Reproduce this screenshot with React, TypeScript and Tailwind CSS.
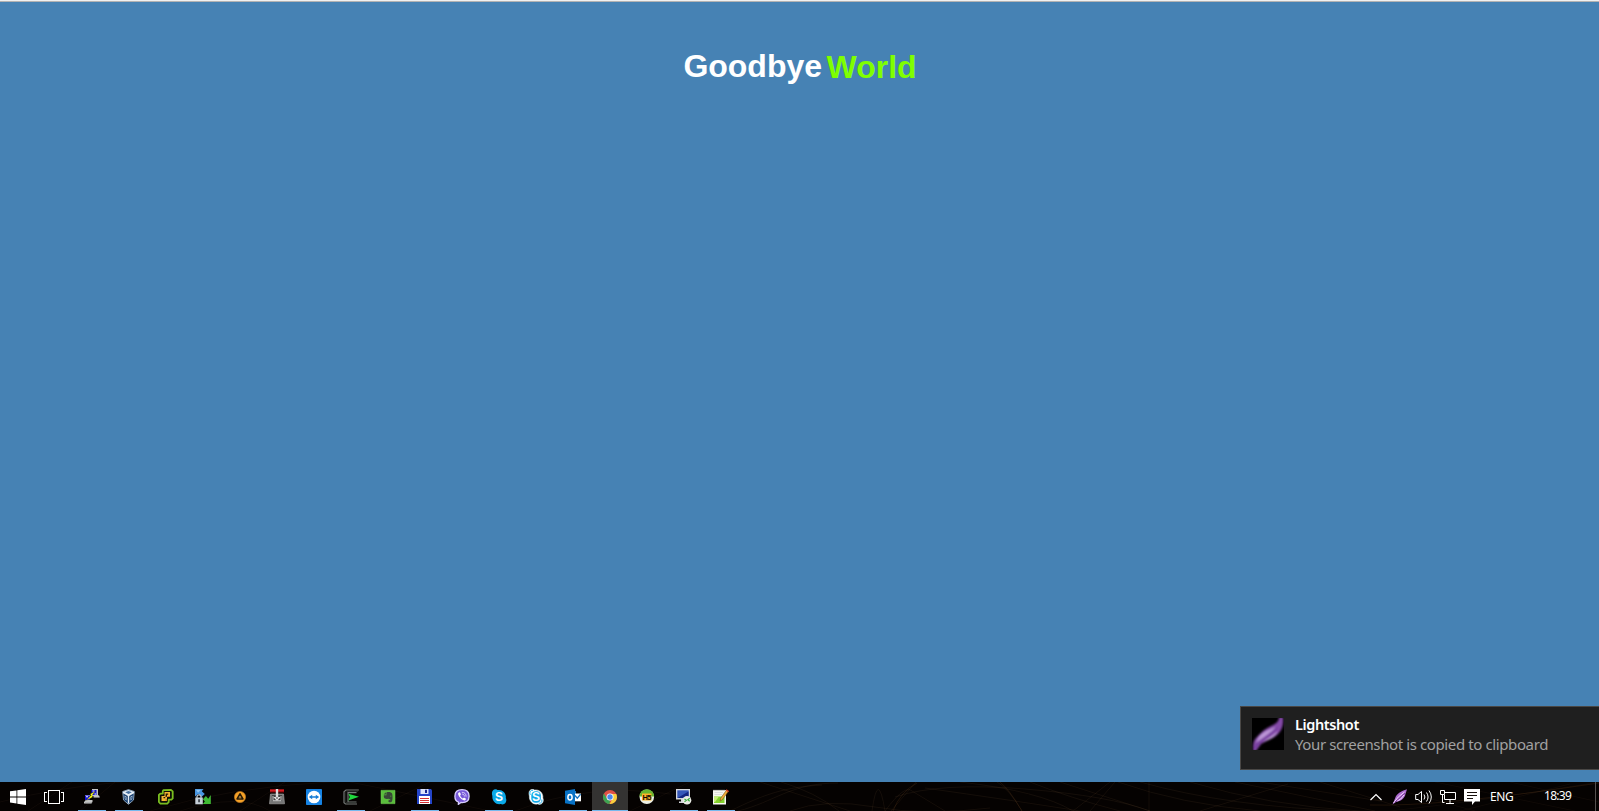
import type { ReactNode } from "react";

type TaskItem = { name: string; icon: ReactNode; running?: boolean; active?: boolean };

function Icon({ children }: { children: ReactNode }) {
  return (
    <svg viewBox="0 0 16 16" className="size-4 shrink-0" fill="none">
      {children}
    </svg>
  );
}

const windowsIcon = (
  <Icon>
    <path fill="#fff" d="M0 2.3 6.500 1.400V7.500H0zM7.300 1.300 16 0V7.500H7.300zM0 8.400H6.500V14.500L0 13.600zM7.300 8.400H16V16L7.300 14.700z" />
  </Icon>
);

const taskViewIcon = (
  <svg viewBox="0 0 20 14" className="h-3.5 w-5" fill="none" stroke="#fff" shapeRendering="crispEdges">
    <path d="M4.500.5h11v13h-11zM3 2.500H.5v9H3M17 2.500h2.500v9H17" />
  </svg>
);

const tasks: TaskItem[] = [
  {
    name: "PuTTY",
    running: true,
    icon: (
      <Icon>
        <path fill="#c4c4c4" d="M8 0h6v6l1.500 1v1.500h-6V7H8zM1 6h5v5h2.500v2L7 14.500H0V13l1.500-1.500z" />
        <path fill="#777" d="M10 8h5.500v.8H10zM1 13.700h7v.9H1z" />
        <path fill="#1010d8" d="M7.500 1h5v5h-5zM1 6.500h5v4.500H1z" />
        <path fill="#fff" d="M8.500 1.500h2v1h-2zM2 7.200h2v1H2zM10.500 4.500h1.500v1h-1.500z" />
        <path fill="#ffff18" stroke="#3b3b00" strokeWidth=".3" d="M11.300 2.300 6.200 5l.8 1.300-4.500 5L8.800 8 7.900 6.500z" />
      </Icon>
    ),
  },
  {
    name: "VirtualBox",
    running: true,
    icon: (
      <Icon>
        <path fill="#163c6c" stroke="#a8c0d8" strokeWidth=".8" d="M7.500.6 13.300 2.500l-.8 8.500-5 4.300-5-4.300-.8-8.500z" />
        <path fill="#e5edf5" d="M2 2.700 7.500.900 13 2.700v1.500L8.200 7v7.500H6.800V7L2 4.200z" />
        <path fill="#416d9f" d="m4.200 3.200 3.300-1.200 3.300 1.200-3.300 1.700z" />
        <path fill="#b9ccdf" d="m3.500 6.500 2 1.200v3.700l-1.700-1.300zM11.500 6.500l-2 1.200v3.700l1.700-1.300z" />
        <path fill="#1c477b" d="m4.200 7.800.8.500v1.800l-.7-.6zM10.800 7.800l-.8.500v1.800l.7-.6z" />
      </Icon>
    ),
  },
  {
    name: "vSphere",
    icon: (
      <Icon>
        <path fill="#0c0d05" stroke="#79bd20" strokeWidth="1.800" strokeLinejoin="round" d="m5.500 1.200 7.500-.3 1.700 1.500v7l-1.500 1.300h-2.500v2.500L9.200 14.600l-7-.1L.9 13V6l1.400-1.400h2.500V2z" />
        <path fill="#f2b632" d="M6.500 3H12v5H9v4H3.500V7h3z" />
        <path fill="#241407" d="M7.700 4.500h2.500v1.300H9v2H7.200v1.500H5.500V8h2z" />
        <path fill="#c9791e" d="M9.500 7h2.500v1h-3v3.800H7.500V10h1.200z" />
      </Icon>
    ),
  },
  {
    name: "WinSCP",
    icon: (
      <Icon>
        <path fill="#4996e1" d="M0 0h8.500L6.800 2.200l3 2.700-3.300 3L3.300 5 0 7.500z" />
        <path fill="#8ec4f0" d="M1 .8h5L3 3.800z" />
        <path fill="#3fba34" d="M15.800 15H7.700l2.200-2.500-2-2.200 3-3.300 2.300 2.700L15.800 6z" />
        <path stroke="#b8c0c9" strokeWidth="1.300" d="M2 9V7.800c0-2.500 4-2.500 4 0V9" />
        <path fill="#c6d0d8" d="M.3 8.500h7.500v6.800H.3z" />
        <path fill="#282f38" d="M3.300 10.300h1.500v3H3.300z" />
      </Icon>
    ),
  },
  {
    name: "Antivirus",
    icon: (
      <Icon>
        <circle cx="8" cy="8" r="5.600" fill="#f6a126" stroke="#c07a25" strokeWidth=".6" />
        <path fill="#fec35b" stroke="#251907" strokeWidth="1.600" strokeLinejoin="round" d="m8 4.800 2.900 5.200H5.100z" />
        <path fill="#513611" d="m8 7.600.8 1.400H7.200z" />
      </Icon>
    ),
  },
  {
    name: "Download tool",
    icon: (
      <Icon>
        <path fill="#757575" stroke="#a9a9a9" strokeWidth=".6" d="M1.500 5h13l1 9.800H.5z" />
        <path fill="#414141" d="M3 6h10v6H3z" />
        <path fill="#d71920" d="M1 .3h14v2.900H1z" />
        <path fill="#83070a" d="M1 2.400h14v.8H1z" />
        <path fill="#ddd" d="M6.800 0h2.400v8h2.500L8 12 4.300 8h2.500z" />
        <path stroke="#c5c5c5" d="M4 7v4.700h8V7" />
        <path fill="#444" d="M7.500 8h1v2h-1z" />
      </Icon>
    ),
  },
  {
    name: "TeamViewer",
    icon: (
      <Icon>
        <rect width="16" height="16" rx=".8" fill="#1683e4" />
        <circle cx="8" cy="8" r="6.300" fill="#fff" />
        <path fill="#167cd5" d="m2.800 8 3.400-2.200v1.400h3.600V5.800L13.200 8l-3.400 2.200V8.800H6.200v1.400z" />
      </Icon>
    ),
  },
  {
    name: "Terminal",
    running: true,
    icon: (
      <Icon>
        <path stroke="#747977" strokeWidth="1.200" d="M15.800 1H3L1 2.800v11L2.500 15H14M13.500 3.600H5v9.200l8.500.2" />
        <path stroke="#343a36" strokeWidth=".7" d="M15 2.300H4L2.800 3.500v10H13" />
        <path fill="#20d83e" d="m5.300 4.800 10.700 3-10.700 3.600 1.500-3.500z" />
      </Icon>
    ),
  },
  {
    name: "Evernote",
    icon: (
      <Icon>
        <path fill="#5bbd3d" stroke="#72cb56" strokeWidth=".5" d="M1 1.300h14v13.400H1z" />
        <path fill="#384438" d="M6.400 3.400c2.400-.7 5.300-.2 5.800 1.700.7 2.700.4 7.500-.8 7.900-1.500.6-3.300.1-3-1.300.2-1 1.400-.7 1.800-.3v-1.200c-.9.5-1.800-.2-2-.8-.7.7-2 .7-3.300.1-1-.5-1.300-2.200-1-3.300h2.500z" />
        <path fill="#384438" d="M3.600 5.500 5.900 3.200v2.300z" />
        <path fill="#58bb3a" d="M10.300 6.800h1v.8h-1z" />
      </Icon>
    ),
  },
  {
    name: "Total Commander",
    running: true,
    icon: (
      <Icon>
        <path fill="#2444c8" d="M0 0h14l1 1.300V15H0z" />
        <path fill="#dce4fa" d="M3.500 0h8v5h-8z" />
        <path fill="#182893" d="M8 .8h2v3.300H8z" />
        <path fill="#fff" d="M2 7h11v8H2z" />
        <path stroke="#d32f32" strokeWidth="1.100" d="M3 9.500h9M3 11.500h9M3 13.500h9" />
      </Icon>
    ),
  },
  {
    name: "Viber",
    icon: (
      <Icon>
        <path fill="#7658d8" stroke="#d8cfff" strokeWidth="1.300" d="M8 .7C3.200.7.900 2.600.900 7.200c0 3.200 1.200 5 3.500 5.800v2.300L7 13.500c5.500.4 8.100-1.500 8.100-6.300C15.100 2.600 12.800.7 8 .7z" />
        <path fill="#fff" d="M5 3.500c.6-.4 1 .1 1.700 1.300.5.900-.4 1.300-.6 1.700.5 1.500 1.500 2.500 2.700 2.900.6-.2.800-1.100 1.700-.6 1.400.8 1.700 1.200 1.300 1.700-.5.800-1.300 1.200-2.200.8-2.700-1.200-4.700-3.300-5.500-6-.2-.7.200-1.400.9-1.800z" />
        <path stroke="#e9e3ff" strokeWidth=".8" strokeLinecap="round" d="M8.200 3.300c2.500.1 3.900 1.500 3.900 4M8.500 5.100c1.200.1 1.800.8 1.900 2" />
      </Icon>
    ),
  },
  {
    name: "Skype",
    running: true,
    icon: (
      <Icon>
        <path fill="#0ba9e8" d="M4.500.3c1 0 1.500.4 2 .7C11.500.2 15.500 4 14.800 9c1.800 3.500-1.200 7.700-5 6C5 16 .8 12 1.400 7 .1 3.500 1.600.3 4.500.3z" />
        <text x="8.100" y="12.100" fill="#fff" textAnchor="middle" fontFamily="Liberation Sans, sans-serif" fontWeight="700" fontSize="12">S</text>
      </Icon>
    ),
  },
  {
    name: "Skype for Business",
    icon: (
      <Icon>
        <path fill="#fff" stroke="#d9f2fd" strokeWidth=".5" d="M4.500.3c1 0 1.500.4 2 .7C11.500.2 15.500 4 14.800 9c1.800 3.500-1.200 7.700-5 6C5 16 .8 12 1.400 7 .1 3.500 1.600.3 4.500.3z" />
        <path stroke="#13aae9" strokeWidth=".9" d="M5 1.500C2.500.8 1.200 3.500 2.300 6M13.800 10.500c.8 2.400-1 4.200-3 3.700" />
        <rect x="3.300" y="2.300" width="9.600" height="11.400" rx="4.200" fill="#12a9e9" />
        <text x="8.100" y="12.200" fill="#fff" textAnchor="middle" fontFamily="Liberation Sans, sans-serif" fontWeight="700" fontSize="12">S</text>
      </Icon>
    ),
  },
  {
    name: "Outlook",
    running: true,
    icon: (
      <Icon>
        <path fill="#1679ca" d="M8 2h3v10H8z" />
        <path fill="#fff" d="M9.500 4.500H16v7.800H9.500z" />
        <path stroke="#1370bd" strokeWidth="1.300" d="m10 6.500 2.300 2.700L15.600 5.200" />
        <path fill="#0872c6" d="M0 1.800 10 0v16L0 14.200z" />
        <ellipse cx="5" cy="8.300" rx="2.100" ry="2.700" stroke="#fff" strokeWidth="1.500" />
      </Icon>
    ),
  },
  {
    name: "Chrome",
    running: true,
    active: true,
    icon: (
      <Icon>
        <circle cx="8" cy="8" r="7" fill="#df5146" />
        <path fill="#3ca452" d="M1.900 4.500 5.300 10 8 11.500 7.600 15A7 7 0 0 1 1.900 4.500z" />
        <path fill="#f9cf3c" d="M8 5h6.300a7 7 0 0 1-6.700 10l3.200-5.500z" />
        <circle cx="8" cy="8" r="3.500" fill="#fff" />
        <circle cx="8" cy="8" r="2.700" fill="#4a89ed" />
      </Icon>
    ),
  },
  {
    name: "HeidiSQL",
    icon: (
      <Icon>
        <circle cx="7.800" cy="7.800" r="7.300" fill="#edf0e6" />
        <path fill="#68b52e" d="M.5 7.500A7.300 7.300 0 0 1 15.100 7.500z" />
        <path fill="#ffb329" d="M3 4.500h9.500v7H3z" />
        <text x="7.900" y="10.800" fill="#140b02" textAnchor="middle" fontFamily="Liberation Sans, sans-serif" fontWeight="700" fontSize="7.500" textLength="9">H5</text>
      </Icon>
    ),
  },
  {
    name: "Remote Desktop",
    running: true,
    icon: (
      <Icon>
        <path fill="#d4d7dc" d="M0 0h14v10.500H0zM5 10.500h4v2h2V14H3v-1.500h2z" />
        <path fill="#3557b9" d="M1.300 1.300h11.400V9H1.300z" />
        <path fill="#132580" d="m1.500 9 11-6.500V9z" />
        <circle cx="11" cy="11.200" r="4.300" fill="#eaece6" />
        <path stroke="#3cad40" strokeWidth="1.200" d="m8.500 10 1.800 1.300-1.800 1.400M13.700 9.300l-1.800 1.500 1.800 1.500" />
      </Icon>
    ),
  },
  {
    name: "Notepad++",
    running: true,
    icon: (
      <Icon>
        <path fill="#f7f7f1" d="M0 1h13v14.500H0z" />
        <path stroke="#343434" strokeWidth="1.400" strokeDasharray="1 1" d="M.5.8h12" />
        <path stroke="#ccc" strokeWidth=".6" d="M1.500 3.500H10M1.500 5.500H9" />
        <path fill="#82d02b" d="M1 7.500h10.500V14H1z" />
        <path fill="#c6ee75" d="M1 7.500h5L2 13H1z" />
        <path fill="#f1ac39" stroke="#66401b" strokeWidth=".5" d="m13.500 1 1.900 1.400-6 8.200-2.300 1.500.5-2.800z" />
        <path fill="#d43d25" d="m13.500.3 2.500 1.700-.8 1.300-2.500-1.700z" />
      </Icon>
    ),
  },
];

function TaskButton({ item }: { item: TaskItem }) {
  return (
    <div
      title={item.name}
      className={`flex h-full w-9 shrink-0 flex-col items-center justify-end ${item.active ? "bg-[#343332]" : ""}`}
    >
      <div className="mb-[5px]">{item.icon}</div>
      <div className={`h-px ${item.active ? "w-full" : "w-7"} ${item.running ? "bg-[#76b9ed]" : ""}`} />
    </div>
  );
}

function TaskbarTexture() {
  return (
    <svg className="absolute inset-0 h-full w-full" viewBox="0 0 1599 29" preserveAspectRatio="none" fill="none" stroke="#8a6a48" strokeWidth=".8">
      <path
        opacity=".15"
        d="M730 29C765 12 785 5 822 3M738 29C775 20 790 1 838 1M760 0 850 29M781 0Q815 10 839 29M790 29Q825 16 875 25T990 26M872 29Q878-14 885 29M885 29Q905 2 912 9L945 29M891 29 916 0M895 15Q940 0 1025 7T1150 29M925 6Q1010 18 1080 29M960 0Q1040 9 1073 29M997 0Q1008 6 1022 29M1030 0Q1070 16 1120 29M1060 0 1150 29M1073 29 1110 0M1090 29 1115 0M1118 0Q1180 22 1260 29M1140 0Q1230 25 1350 29M1149 29V0M1190 0Q1270 24 1360 29M1200 29 1288 2M1235 0 1375 29M1260 0 1380 19M1320 0 1400 25"
      />
      <path opacity=".2" stroke="#a8672d" d="M893 29Q900 10 917 1M1000 0Q1009 7 1022 29M1370 23Q1440 25 1599 1" />
      <path
        opacity=".1"
        d="M0 20Q60 5 122 0M28 29 72 0M80 29 115 0M150 29Q230 5 330 0M180 29Q240 10 270 29M240 29 285 0M350 0Q430 16 490 29M370 29 430 0M515 29Q590 0 670 12M630 29 690 0M1370 0 1475 29M1390 29Q1490 18 1599 0M1435 0 1575 29M1460 29 1570 2M1510 0 1599 20"
      />
    </svg>
  );
}

function Tray() {
  return (
    <div className="relative flex h-full w-[225px] items-center pt-px text-white">
      <svg viewBox="0 0 12 8" className="h-2 w-3 shrink-0" fill="none" stroke="#fff" strokeWidth="1.200">
        <path d="m.5 7 5.500-5.500L11.500 7" />
      </svg>
      <svg viewBox="0 0 16 16" className="ml-2.5 size-4 shrink-0">
        <path fill="#ad6bcf" d="M15 .3C9 2 4.500 5 3 9.500L.5 15.500 4 13c5-.8 9-4 9.500-8z" />
        <path stroke="#efd7fc" strokeWidth="1" fill="none" d="M1.500 14Q5.500 7.500 12.500 3M5 12Q9 11 12 6" />
        <path stroke="#743491" strokeWidth=".8" fill="none" d="M3 13Q8 9 13 4" />
      </svg>
      <svg viewBox="0 0 18 16" className="ml-[7px] h-4 w-[18px] shrink-0" fill="none" stroke="#fff" strokeWidth="1">
        <path d="M.700 5.500H3L6.500 2.500v11L3 10.500H.700zM9 5.500q1.800 2.500 0 5M11.500 3.500q3.100 4.500 0 9M14 1.500q4.600 6.500 0 13" />
      </svg>
      <svg viewBox="0 0 16 16" className="ml-[7px] size-4 shrink-0" fill="none" stroke="#fff" strokeWidth="1">
        <path d="M4.500 3.500h11v7h-11V6M.5 1.500h4v4h-4zM2.500 5.500v8h2M10 10.500v4M6 14.500h8" />
      </svg>
      <svg viewBox="0 0 16 16" className="ml-2 size-4 shrink-0">
        <path fill="#fff" d="M0 0h16v12.500h-5L8 16v-3.500H0z" />
        <path stroke="#17100c" d="M3 3.500h10M3 6.500h10M3 9.500h6" shapeRendering="crispEdges" />
      </svg>
      <span className="ml-2.5 w-[54px] text-[12px] leading-4 tracking-[-0.4px]">ENG</span>
      <span className="relative -top-px text-[12px] leading-4 tracking-[-0.7px]">18:39</span>
    </div>
  );
}

function Toast() {
  return (
    <aside className="absolute right-0 bottom-[41px] flex h-16 w-[359px] border border-r-0 border-[#494745] bg-[#1f1f1f] pt-[11px] pl-[11px] font-['Noto_Sans','Open_Sans',sans-serif]">
      <svg viewBox="0 0 32 32" className="size-8 shrink-0 bg-black">
        <defs>
          <filter id="soft"><feGaussianBlur stdDeviation=".8" /></filter>
        </defs>
        <g filter="url(#soft)">
          <path fill="#8448a8" d="M27-1h4c1 8-1 13-5 17-5 5-11 6-17 10l-5 7H1c0-6 0-10 3-13C9 14 14 10 19 8c6-3 8-5 8-9z" />
          <path fill="#bd98d8" d="M24 9C18 11 9 15 6 20l-2 5c6-5 12-7 20-16z" />
          <path fill="#d5bfe8" d="M26 13c-3 6-9 9-16 11 6-3 11-6 16-11z" />
          <path stroke="#70389c" strokeWidth="1.600" fill="none" d="M2 31C6 23 17 18 25 10" />
        </g>
      </svg>
      <div className="ml-[11px] -mt-[4px] whitespace-nowrap">
        <div className="text-[14.5px] leading-5 font-semibold tracking-[-0.4px] text-white">Lightshot</div>
        <div className="text-[15px] leading-5 tracking-[-0.39px] text-[#a1a1a1]">Your screenshot is copied to clipboard</div>
      </div>
    </aside>
  );
}

export default function App() {
  return (
    <div className="relative flex h-screen w-full flex-col overflow-hidden bg-[#4682b4]">
      <div className="h-px shrink-0 bg-[#f0f0f0]" />
      <div className="h-px shrink-0 bg-[#b3b3b3]" />
      <main className="flex flex-1 justify-center pt-[46px] pl-px">
        <h1 className="flex h-9 gap-[4.500px] font-['Liberation_Sans',Arial,sans-serif] text-[32px] leading-9 font-bold">
          <span className="text-white">Goodbye</span>
          <span className="pt-px text-[#7fff00]">World</span>
        </h1>
      </main>
      <Toast />
      <footer className="relative flex h-[29px] shrink-0 justify-between bg-[#050201] font-['Noto_Sans','Open_Sans',sans-serif]">
        <TaskbarTexture />
        <nav className="relative flex gap-px">
          <div className="flex h-full w-9 items-center justify-center pt-px">{windowsIcon}</div>
          <div className="flex h-full w-9 items-center justify-center pt-px pr-0.5">{taskViewIcon}</div>
          {tasks.map((item) => (
            <TaskButton key={item.name} item={item} />
          ))}
        </nav>
        <div className="relative flex">
          <Tray />
          <div className="w-1 border-l border-[#55504e]" />
        </div>
      </footer>
    </div>
  );
}
